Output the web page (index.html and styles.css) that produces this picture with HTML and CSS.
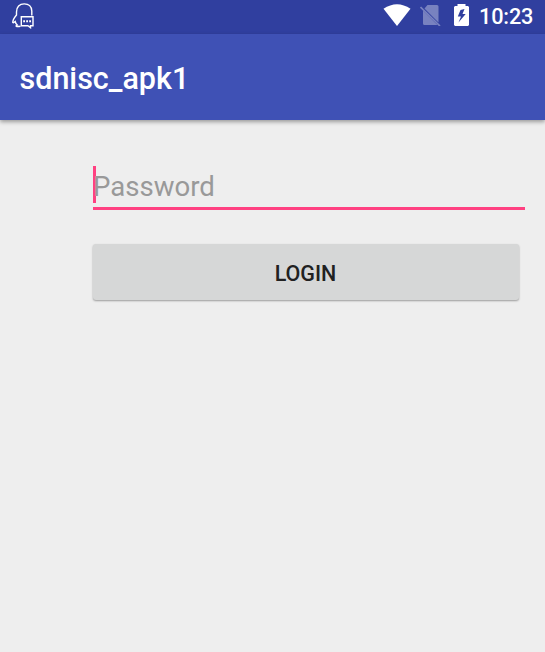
FILE: index.html
```html
<!DOCTYPE html>
<html lang="en">
<head>
<meta charset="utf-8">
<title>sdnisc_apk1</title>
<link rel="stylesheet" href="styles.css">
</head>
<body>
<div class="status">
  <svg class="notify" width="24" height="26" viewBox="0 0 24 26"><path d="M20.800 12.500V8C20.500 3 17 .9 13.200 .9C8.500 .9 5.500 4 5.500 9V12C3 15 1.500 17 1.800 19.500L2.500 19.800L4.200 18.500C4.500 20 5.200 21 6.300 22C4 23.200 5 23.800 9.500 23.300"/><path d="M10.300 13.700h11.700v9h-2.500v2l-2.600-2h-6.600z"/><path class="dots" d="M12.200 18.300h1.800m1.200 0h1.800m1.200 0h1.800"/></svg>
  <svg class="wifi" width="28" height="22" viewBox="0 0 28 22"><path d="M.5 4.800Q14-4.300 27.500 4.800L14 22Z"/></svg>
  <svg class="nosim" width="21" height="22" viewBox="0 0 21 22"><path d="M7.500 1H17q1.500 0 1.500 1.500V18.500L4.500 4.500zM3 6.500l14.500 14.500H4.500q-1.500 0-1.500-1.500z"/><path class="slash" d="M.5 3l19.500 19"/></svg>
  <svg class="battery" width="15" height="22" viewBox="0 0 15 22"><path fill-rule="evenodd" d="M3.500 0h8v2h2.500l1 1v18l-1 1H1l-1-1V3l1-1h2.500zM10.500 5L6.500 6L3.800 12.500H7L4.500 18.500L11.700 10H8.500z"/></svg>
  <span class="time">10:23</span>
</div>
<header class="appbar"><h1>sdnisc_apk1</h1></header>
<main class="form">
  <div class="field"><span class="caret"></span><span class="hint">Password</span></div>
  <button class="login">LOGIN</button>
</main>
</body>
</html>
```

FILE: styles.css
```css
* { box-sizing: border-box; }
body { margin: 0; width: 545px; height: 652px; overflow: hidden; background: #eee; font-family: Roboto, sans-serif; }
.status { height: 34px; background: #303f9f; display: flex; align-items: flex-start; padding: 3px 11px 0 11px; color: #fff; }
.status svg { flex: none; fill: #fff; }
.status .notify { fill: none; stroke: #fff; stroke-width: 1.4; margin-right: auto; }
.notify .dots { stroke-width: 2; }
.wifi { margin: 1px 9px 0 0; }
.nosim { margin: 1px 13px 0 0; opacity: .35; }
.slash { stroke: #fff; stroke-width: 1.7; }
.battery { margin: 1px 10px 0 0; }
.time { font-size: 21.7px; line-height: 27px; font-weight: 500; width: 55px; white-space: nowrap; letter-spacing: -0.15px; }
.appbar { height: 86px; background: #3f51b5; display: flex; align-items: center; padding: 4px 20px 0 19.5px; box-shadow: 0 2px 4px rgba(0,0,0,.35); }
h1 { margin: 0; color: #fff; font-size: 30.5px; line-height: 40px; font-weight: 500; }
.form { padding: 44px 20.5px 0 93px; }
.field { height: 46px; border-bottom: 3px solid #ff4081; display: flex; position: relative; }
.caret { position: absolute; left: 0; top: 2px; width: 3px; height: 37px; background: #ff4081; }
.hint { position: relative; font-size: 27.6px; line-height: 46px; color: #999; }
.login { display: block; width: 426px; height: 56px; margin: 34px 0 0 -0.5px; padding: 2px 0 0; border: 0; border-radius: 3px; background: #d6d7d7; color: #212121; font: 500 21.5px Roboto, sans-serif; box-shadow: 0 1px 2px rgba(0,0,0,.35); }
```
